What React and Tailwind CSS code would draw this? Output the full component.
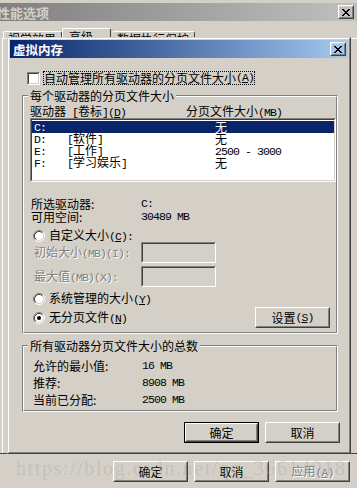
import React from "react";

function M({ children, className = "" }) {
  return (
    <span className={"font-['Liberation_Mono',monospace] text-[11.5px] tracking-[-0.9px] " + className}>
      {children}
    </span>
  );
}

function Raised({ className = "", innerClassName = "", children }) {
  return (
    <div className={"border border-t-white border-l-white border-r-[#404040] border-b-[#404040] " + className}>
      <div
        className={
          "h-full border border-t-[#d4d0c8] border-l-[#d4d0c8] border-r-[#808080] border-b-[#808080] flex items-center justify-center " +
          innerClassName
        }
      >
        {children}
      </div>
    </div>
  );
}

function Sunken({ className = "", innerClassName = "", children }) {
  return (
    <div className={"border border-t-[#808080] border-l-[#808080] border-r-white border-b-white " + className}>
      <div
        className={
          "h-full border border-t-[#404040] border-l-[#404040] border-r-[#d4d0c8] border-b-[#d4d0c8] " + innerClassName
        }
      >
        {children}
      </div>
    </div>
  );
}

function Group({ title, className = "", children }) {
  return (
    <div className={"border border-t-[#808080] border-l-[#808080] border-r-white border-b-white " + className}>
      <div className="h-full border border-t-white border-l-white border-r-[#808080] border-b-[#808080] flex flex-col">
        <div className="-mt-[7px] ml-[4px] w-fit px-[2px] bg-[#d4d0c8] h-[12px] leading-[12px]">{title}</div>
        {children}
      </div>
    </div>
  );
}

function Button({ children, def = false, disabled = false }) {
  const label = disabled ? (
    <span className="text-[#808080] [text-shadow:1px_1px_0_#ffffff]">{children}</span>
  ) : (
    children
  );
  if (def) {
    return (
      <div className="w-[75px] h-[21px] border border-black">
        <Raised className="h-full">{label}</Raised>
      </div>
    );
  }
  return <Raised className="w-[75px] h-[21px]">{label}</Raised>;
}

function CloseX() {
  return (
    <svg width="8" height="7" viewBox="0 0 8 7" shapeRendering="crispEdges">
      <path
        fill="#000"
        d="M0 0h2v1h-2z M6 0h2v1h-2z M1 1h2v1h-2z M5 1h2v1h-2z M2 2h4v1h-4z M3 3h2v1h-2z M2 4h4v1h-4z M1 5h2v1h-2z M5 5h2v1h-2z M0 6h2v1h-2z M6 6h2v1h-2z"
      />
    </svg>
  );
}

function Radio({ checked = false }) {
  return (
    <svg width="12" height="12" viewBox="0 0 12 12" className="shrink-0">
      <circle cx="6" cy="6" r="4.5" fill="#ffffff" />
      <path d="M2.11 9.89 A5.5 5.5 0 0 1 9.89 2.11" stroke="#808080" fill="none" />
      <path d="M9.89 2.11 A5.5 5.5 0 0 1 2.11 9.89" stroke="#ffffff" fill="none" />
      <path d="M2.82 9.18 A4.5 4.5 0 0 1 9.18 2.82" stroke="#404040" fill="none" />
      <path d="M9.18 2.82 A4.5 4.5 0 0 1 2.82 9.18" stroke="#d4d0c8" fill="none" />
      {checked && <circle cx="6" cy="6" r="2" fill="#000000" />}
    </svg>
  );
}

const drives = [
  { d: "C:", l: null, s: "无", sel: true },
  { d: "D:", l: "软件", s: "无" },
  { d: "E:", l: "工作", s: "2500 - 3000", mono: true },
  { d: "F:", l: "学习娱乐", s: "无" },
];

const grey = "text-[#808080] [text-shadow:1px_1px_0_#ffffff]";

export default function App() {
  return (
    <div className="w-[357px] h-[488px] bg-[#d4d0c8] relative overflow-hidden font-['Noto_Sans_CJK_SC',sans-serif] text-[12px] leading-[12px] text-black flex flex-col">
      {/* outer window title */}
      <div className="h-[3px] shrink-0" />
      <div className="h-[18px] shrink-0 flex items-center bg-linear-to-r from-[#808080] to-[#c0c0c0]">
        <span className="-ml-[3px] text-[13px] leading-[13px] font-bold text-[#d4d0c8]">性能选项</span>
        <Raised className="ml-auto mr-[3px] w-[16px] h-[14px]">
          <CloseX />
        </Raised>
      </div>

      {/* tabs */}
      <div className="h-[17px] shrink-0 flex items-end pl-[3px]">
        <div className="w-[59px] h-[7px] border-t border-l border-r border-t-white border-l-white border-r-[#404040] rounded-t-[2px] pl-[4px] pt-[1px] whitespace-nowrap">
          视觉效果
        </div>
        <div className="w-[49px] h-[10px] border-t border-l border-r border-t-white border-l-white border-r-[#404040] rounded-t-[2px] pl-[6px] pt-[2px] whitespace-nowrap">
          高级
        </div>
        <div className="ml-[1px] w-[83px] h-[7px] border-t border-r border-t-white border-r-[#404040] rounded-t-[2px] pl-[5px] pt-[1px] whitespace-nowrap">
          数据执行保护
        </div>
      </div>

      {/* tab page */}
      <div className="h-[415px] shrink-0 ml-[2px] border-l border-t border-l-white border-t-white" />
      <div className="h-[1px] shrink-0 bg-[#404040]" />

      {/* outer buttons */}
      <div className="flex justify-end gap-[6px] pr-[7px] pt-[7px]">
        <Button>确定</Button>
        <Button>取消</Button>
        <Button disabled>
          应用<M>(<u>A</u>)</M>
        </Button>
      </div>

      {/* watermark */}
      <div className="absolute left-[16px] top-[458px] whitespace-nowrap font-['Liberation_Serif',serif] text-[20px] leading-[20px] tracking-[1.6px] text-[#a8a49c]/35 pointer-events-none">
        https://blog.csdn.net/qq_36614018
      </div>

      {/* inner dialog */}
      <div className="absolute left-[7px] top-[37px] w-[344px] h-[417px] border border-t-[#d4d0c8] border-l-[#d4d0c8] border-r-[#404040] border-b-[#404040] bg-[#d4d0c8]">
        <div className="h-full border border-t-white border-l-white border-r-[#808080] border-b-[#808080] p-[1px] flex flex-col">
          <div className="h-[18px] shrink-0 flex items-center bg-linear-to-r from-[#0a246a] to-[#a6caf0] pl-[3px] pr-[2px]">
            <span className="text-white font-bold text-[12.5px] leading-[13px]">虚拟内存</span>
            <Raised className="ml-auto w-[16px] h-[14px]">
              <CloseX />
            </Raised>
          </div>

          <div className="flex flex-col pl-[12px] pr-[10px]">
            {/* checkbox */}
            <div className="mt-[13px] h-[14px] flex items-center">
              <Sunken className="ml-[5px] w-[13px] h-[13px]" innerClassName="bg-white" />
              <div className="ml-[3px] h-[14px] border border-dotted border-black flex items-center whitespace-nowrap">
                自动管理所有驱动器的分页文件大小<M>(<u>A</u>)</M>
              </div>
            </div>

            {/* group 1 */}
            <Group title="每个驱动器的分页文件大小" className="mt-[10px] h-[239px]">
              <div className="mt-[3px] h-[12px] flex whitespace-nowrap">
                <div className="pl-[6px] w-[162px]">
                  驱动器<M> [</M>卷标<M>]</M>
                  <M>
                    (<u>D</u>)
                  </M>
                </div>
                <div>
                  分页文件大小<M>(MB)</M>
                </div>
              </div>
              <Sunken className="mt-[1px] ml-[6px] w-[306px] h-[64px]" innerClassName="bg-white pt-[1px]">
                {drives.map((r) => (
                  <div
                    key={r.d}
                    className={
                      "h-[12px] flex items-center pl-[2px] whitespace-nowrap " +
                      (r.sel ? "bg-[#0a246a] text-white" : "")
                    }
                  >
                    <div className="w-[33px]">
                      <M>{r.d}</M>
                    </div>
                    <div className="w-[148px]">
                      {r.l && (
                        <>
                          <M>[</M>
                          {r.l}
                          <M>]</M>
                        </>
                      )}
                    </div>
                    <div>{r.mono ? <M>{r.s}</M> : r.s}</div>
                  </div>
                ))}
              </Sunken>

              <div className="mt-[16px] h-[12px] flex pl-[7px]">
                <div className="w-[110px]">所选驱动器:</div>
                <M>C:</M>
              </div>
              <div className="mt-[1px] h-[12px] flex pl-[7px]">
                <div className="w-[110px]">可用空间:</div>
                <M>30489 MB</M>
              </div>

              <div className="mt-[7px] h-[12px] flex items-center pl-[9px] gap-[4px] whitespace-nowrap">
                <Radio />
                <span>
                  自定义大小
                  <M>
                    (<u>C</u>):
                  </M>
                </span>
              </div>
              <div className="h-[21px] flex items-center pl-[10px] whitespace-nowrap">
                <div className={"w-[107px] " + grey}>
                  初始大小<M>(MB)(I):</M>
                </div>
                <Sunken className="w-[75px] h-[21px]" />
              </div>
              <div className="mt-[3px] h-[21px] flex items-center pl-[10px] whitespace-nowrap">
                <div className={"w-[107px] " + grey}>
                  最大值<M>(MB)(X):</M>
                </div>
                <Sunken className="w-[75px] h-[21px]" />
              </div>
              <div className="mt-[6px] h-[12px] flex items-center pl-[9px] gap-[4px] whitespace-nowrap">
                <Radio />
                <span>
                  系统管理的大小
                  <M>
                    (<u>Y</u>)
                  </M>
                </span>
              </div>
              <div className="mt-[2px] h-[21px] flex items-center pl-[9px] whitespace-nowrap">
                <Radio checked />
                <span className="ml-[4px]">
                  无分页文件
                  <M>
                    (<u>N</u>)
                  </M>
                </span>
                <div className="ml-auto mr-[6px]">
                  <Button>
                    设置
                    <M>
                      (<u>S</u>)
                    </M>
                  </Button>
                </div>
              </div>
            </Group>

            {/* group 2 */}
            <Group title="所有驱动器分页文件大小的总数" className="mt-[11px] h-[67px]">
              <div className="mt-[8px] h-[12px] flex pl-[9px]">
                <div className="w-[109px]">允许的最小值:</div>
                <M>16 MB</M>
              </div>
              <div className="mt-[5px] h-[12px] flex pl-[9px]">
                <div className="w-[109px]">推荐:</div>
                <M>8908 MB</M>
              </div>
              <div className="mt-[5px] h-[12px] flex pl-[9px]">
                <div className="w-[109px]">当前已分配:</div>
                <M>2500 MB</M>
              </div>
            </Group>

            <div className="mt-[10px] -mr-[2px] flex justify-end gap-[6px]">
              <Button def>确定</Button>
              <Button>取消</Button>
            </div>
          </div>
        </div>
      </div>
    </div>
  );
}
